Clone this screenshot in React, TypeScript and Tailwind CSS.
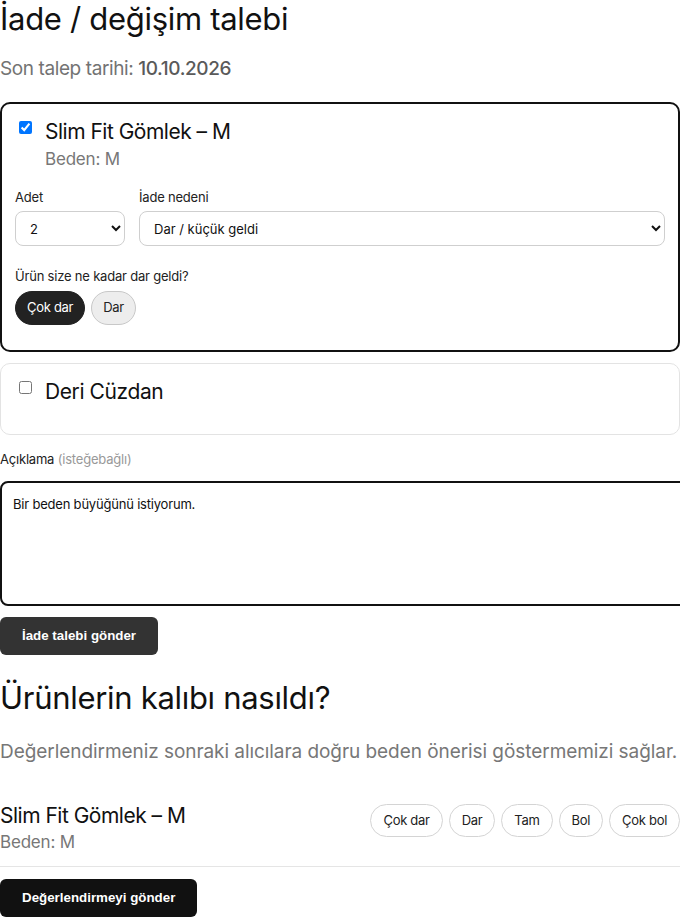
import React from "react";

const font = { fontFamily: "Inter, 'Noto Sans', sans-serif" };
const btnFont = { fontFamily: "'Liberation Sans', Arial, sans-serif" };

function Pill({ label, active }: { label: string; active?: boolean }) {
  return (
    <button
      type="button"
      className={
        active
          ? "h-[34px] px-[11px] rounded-full bg-[#222222] text-white text-[13px] border border-[#222222] tracking-[-0.3px]"
          : "h-[34px] px-[11px] rounded-full bg-[#ededed] text-[#222] text-[13px] border border-[#c8c8c8] tracking-[-0.3px]"
      }
    >
      {label}
    </button>
  );
}

function FitPill({ label }: { label: string }) {
  return (
    <button
      type="button"
      className="h-[33px] px-[12px] rounded-full bg-white text-[#222] text-[13px] border border-[#d4d4d4] tracking-[-0.3px]"
    >
      {label}
    </button>
  );
}

export default function App() {
  return (
    <div className="w-[680px] overflow-hidden bg-white text-[#111]" style={font}>
      <h1 className="text-[31px] leading-[38px] tracking-[-0.3px] font-normal">İade / değişim talebi</h1>
      <p className="mt-[18px] text-[19px] leading-[26px] text-[#737373] tracking-[-0.4px]">
        Son talep tarihi: <span className="font-medium text-[#5a5a5a]">10.10.2026</span>
      </p>

      <div className="mt-[20px] border-2 border-[#111] rounded-[10px] px-[13px] pt-[13px] pb-[25px]">
        <div className="flex items-start">
          <input type="checkbox" defaultChecked className="ml-[4px] mt-[4px]" />
          <div className="ml-[13px]">
            <div className="text-[21px] leading-[30px] tracking-[-0.5px] text-[#111]">Slim Fit Gömlek – M</div>
            <div className="text-[17px] leading-[24px] text-[#777] tracking-[-0.2px]">Beden: M</div>
          </div>
        </div>

        <div className="mt-[16px] flex gap-[14px]">
          <div className="w-[110px]">
            <div className="text-[13px] leading-[20px] text-[#222] tracking-[-0.2px]">Adet</div>
            <select className="mt-[4px] w-full h-[35px] rounded-[8px] border border-[#cfcfcf] bg-white pl-[10px] text-[13px] text-[#111]">
              <option>2</option>
            </select>
          </div>
          <div className="flex-1">
            <div className="text-[13px] leading-[20px] text-[#222] tracking-[-0.2px]">İade nedeni</div>
            <select className="mt-[4px] w-full h-[35px] rounded-[8px] border border-[#cfcfcf] bg-white pl-[10px] text-[13px] text-[#111]">
              <option>Dar / küçük geldi</option>
            </select>
          </div>
        </div>

        <div className="mt-[20px] text-[13px] leading-[20px] text-[#222] tracking-[-0.2px]">Ürün size ne kadar dar geldi?</div>
        <div className="mt-[5px] flex gap-[6px]">
          <Pill label="Çok dar" active />
          <Pill label="Dar" />
        </div>
      </div>

      <div className="mt-[11px] border border-[#e3e3e3] rounded-[10px] px-[14px] pt-[13px] pb-[27px]">
        <div className="flex items-start">
          <input type="checkbox" className="ml-[4px] mt-[4px]" />
          <div className="ml-[13px] text-[21px] leading-[30px] tracking-[-0.4px] text-[#111]">Deri Cüzdan</div>
        </div>
      </div>

      <div className="mt-[14px] text-[13px] leading-[20px] text-[#222] tracking-[-0.2px]">
        Açıklama <span className="text-[#999]">(isteğebağlı)</span>
      </div>
      <textarea
        className="mt-[12px] block w-[700px] h-[125px] border-2 border-[#111] rounded-[8px] px-[11px] py-[12px] text-[13px] text-[#111] resize-none tracking-[-0.2px]"
        defaultValue="Bir beden büyüğünü istiyorum."
      />
      <button
        type="button"
        className="mt-[11px] h-[38px] px-[22px] rounded-[6px] bg-[#333333] text-white text-[13.333px] font-bold"
        style={btnFont}
      >
        İade talebi gönder
      </button>

      <h2 className="mt-[23px] text-[31px] leading-[40px] tracking-[-0.3px] font-normal">Ürünlerin kalıbı nasıldı?</h2>
      <p className="mt-[21px] text-[19px] leading-[26px] text-[#777] tracking-[-0.06px]">
        Değerlendirmeniz sonraki alıcılara doğru beden önerisi göstermemizi sağlar.
      </p>

      <div className="mt-[39px] flex items-start justify-between pb-[12px] border-b border-[#e5e5e5]">
        <div>
          <div className="text-[21px] leading-[24px] tracking-[-0.5px] text-[#111]">Slim Fit Gömlek – M</div>
          <div className="mt-[2px] text-[17px] leading-[24px] text-[#777] tracking-[-0.2px]">Beden: M</div>
        </div>
        <div className="flex gap-[6px]">
          <FitPill label="Çok dar" />
          <FitPill label="Dar" />
          <FitPill label="Tam" />
          <FitPill label="Bol" />
          <FitPill label="Çok bol" />
        </div>
      </div>

      <button
        type="button"
        className="mt-[12px] h-[38px] px-[22px] rounded-[6px] bg-[#111111] text-white text-[13.333px] font-bold"
        style={btnFont}
      >
        Değerlendirmeyi gönder
      </button>
    </div>
  );
}
